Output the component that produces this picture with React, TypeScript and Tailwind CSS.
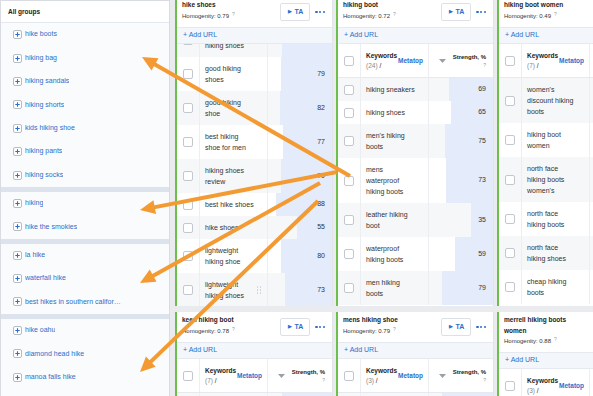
import { useEffect, useRef } from "react";

type Row = { kw: string[]; value: number };

type Card = {
  title: string;
  homogenity: string;
  count: number;
  rows: Row[];
  scrollTop?: number;
  grip?: boolean;
};

const groups: string[][] = [
  ["hike boots", "hiking bag", "hiking sandals", "hiking shorts", "kids hiking shoe", "hiking pants", "hiking socks"],
  ["hiking", "hike the smokies"],
  ["la hike", "waterfall hike", "best hikes in southern california"],
  ["hike oahu", "diamond head hike", "manoa falls hike"],
];

const topCards: Card[] = [
  {
    title: "hike shoes",
    homogenity: "0.79",
    count: 12,
    scrollTop: 55,
    grip: true,
    rows: [
      { kw: ["waterproof", "hiking shoes"], value: 78 },
      { kw: ["good hiking", "shoes"], value: 79 },
      { kw: ["good hiking", "shoe"], value: 82 },
      { kw: ["best hiking", "shoe for men"], value: 77 },
      { kw: ["hiking shoes", "review"], value: 79 },
      { kw: ["best hike shoes"], value: 88 },
      { kw: ["hike shoes"], value: 55 },
      { kw: ["lightweight", "hiking shoe"], value: 80 },
      { kw: ["lightweight", "hiking shoes"], value: 73 },
      { kw: ["trail shoes"], value: 61 },
    ],
  },
  {
    title: "hiking boot",
    homogenity: "0.72",
    count: 24,
    rows: [
      { kw: ["hiking sneakers"], value: 69 },
      { kw: ["hiking shoes"], value: 65 },
      { kw: ["men's hiking", "boots"], value: 75 },
      { kw: ["mens", "waterproof", "hiking boots"], value: 73 },
      { kw: ["leather hiking", "boot"], value: 35 },
      { kw: ["waterproof", "hiking boots"], value: 59 },
      { kw: ["men hiking", "boots"], value: 79 },
    ],
  },
  {
    title: "hiking boot women",
    homogenity: "0.49",
    count: 7,
    rows: [
      { kw: ["women's", "discount hiking", "boots"], value: 71 },
      { kw: ["hiking boot", "women"], value: 66 },
      { kw: ["north face", "hiking boots", "women's"], value: 52 },
      { kw: ["north face", "hiking boots"], value: 48 },
      { kw: ["north face", "hiking shoes"], value: 44 },
      { kw: ["cheap hiking", "boots"], value: 40 },
    ],
  },
];

const bottomCards: Card[] = [
  {
    title: "keen hiking boot",
    homogenity: "0.78",
    count: 7,
    rows: [{ kw: ["keen hiking boots"], value: 78 }],
  },
  {
    title: "mens hiking shoe",
    homogenity: "0.79",
    count: 3,
    rows: [{ kw: ["mens hiking shoes"], value: 79 }],
  },
  {
    title: "merrell hiking boots women",
    homogenity: "0.88",
    count: 3,
    rows: [{ kw: ["merrell hiking", "boots women"], value: 88 }],
  },
];

const arrows = [
  { x1: 350, y1: 176, x2: 142, y2: 57 },
  { x1: 337, y1: 172, x2: 140, y2: 210 },
  { x1: 320, y1: 183, x2: 140, y2: 283 },
  { x1: 318, y1: 201, x2: 140, y2: 372 },
];

function PlusBox() {
  return (
    <svg width="9" height="9" viewBox="0 0 9 9" className="shrink-0">
      <rect x="0.5" y="0.5" width="8" height="8" rx="1.5" fill="#fff" stroke="#b7bcc4" />
      <path d="M4.5 2.3v4.4M2.3 4.5h4.4" stroke="#2c6ecb" strokeWidth="1.1" />
    </svg>
  );
}

function Checkbox() {
  return <div className="h-[10px] w-[10px] rounded-[2px] border border-[#c3c8cf] bg-white" />;
}

function Sidebar() {
  return (
    <aside className="h-[396px] w-[170px] shrink-0 border-x border-t border-[#d9dde3] bg-[#fafbfc]">
      <div className="flex h-[22px] items-center border-b border-[#e4e7eb] bg-white pl-[7px] text-[6.5px] font-bold text-[#222]">
        All groups
      </div>
      {groups.map((g, gi) => (
        <div key={gi}>
          {gi > 0 && <div className="h-[5px] bg-[#dde3ed]" />}
          {g.map((item) => (
            <div key={item} className="flex h-[23.4px] items-center gap-[3px] pl-[12px]">
              <PlusBox />
              <span className="max-w-[96px] truncate text-[7px] text-[#2c6ecb]">{item}</span>
            </div>
          ))}
        </div>
      ))}
    </aside>
  );
}

function Dots() {
  return (
    <div className="flex items-center gap-[1.5px]">
      <span className="h-[2.2px] w-[2.2px] rounded-full bg-[#2c6ecb]" />
      <span className="h-[2.2px] w-[2.2px] rounded-full bg-[#2c6ecb]" />
      <span className="h-[2.2px] w-[2.2px] rounded-full bg-[#2c6ecb]" />
    </div>
  );
}

function Grip() {
  return (
    <div className="grid grid-cols-2 gap-[1.5px]">
      {[0, 1, 2, 3, 4, 5].map((i) => (
        <span key={i} className="h-[1.5px] w-[1.5px] rounded-full bg-[#c9d2de]" />
      ))}
    </div>
  );
}

function GroupCard({ card, tall }: { card: Card; tall: boolean }) {
  const ref = useRef<HTMLDivElement>(null);

  useEffect(() => {
    if (ref.current && card.scrollTop) ref.current.scrollTop = card.scrollTop;
  }, [card.scrollTop]);

  return (
    <div
      className={`flex w-[158px] shrink-0 flex-col border-l-2 border-r border-l-[#6cbf4a] border-r-[#e1e4e8] bg-white ${
        tall ? "h-[309px]" : "h-[120px]"
      }`}
    >
      <div className="flex items-start justify-between pb-[6px] pl-[5px] pr-[7px] pt-[3px]">
        <div>
          <div className="max-w-[80px] text-[6.5px] font-bold leading-[10.5px] text-[#222]">{card.title}</div>
          <div className="text-[6px] leading-[10px] text-[#333]">
            Homogenity: {card.homogenity}
            <span className="ml-[3px] align-top text-[5px] leading-[6px] text-[#999]">?</span>
          </div>
        </div>
        <div className="mt-[3px] flex items-center gap-[5px]">
          <div className="flex h-[18px] w-[30px] items-center justify-center gap-[3px] rounded-[2px] border border-[#dde1e6] bg-white text-[7px] font-bold text-[#2c6ecb]">
            <span className="text-[4.5px]">▶</span>TA
          </div>
          <Dots />
        </div>
      </div>

      <div className="flex h-[17px] shrink-0 items-center border-y border-[#e6eaf0] bg-[#f3f6fa] pl-[6px] text-[7px] text-[#2c6ecb]">
        + Add URL
      </div>

      <div ref={ref} className="min-h-0 flex-1 overflow-hidden">
        <div className="flex h-[34px] border-b border-[#e6e9ee] bg-white">
          <div className="flex w-[23px] items-center justify-center border-r border-[#eceef1]">
            <Checkbox />
          </div>
          <div className="flex w-[68px] items-center border-r border-[#eceef1] pl-[5px]">
            <div>
              <div className="text-[6.5px] font-bold leading-[11px] text-[#222]">Keywords</div>
              <div className="text-[6.5px] leading-[10px] text-[#222]">
                <span className="text-[#888]">({card.count})</span> /
              </div>
            </div>
            <span className="ml-[1px] text-[6.5px] font-bold text-[#2c6ecb]">Metatop</span>
          </div>
          <div className="flex flex-1 items-center pl-[10px] pr-[7px]">
            <svg width="7" height="4" viewBox="0 0 7 4">
              <path d="M0 0h7L3.5 4z" fill="#9aa0a8" />
            </svg>
            <div className="ml-auto flex flex-col items-end">
              <span className="text-[6px] font-bold leading-[9px] text-[#222]">Strength, %</span>
              <span className="text-[5px] leading-[7px] text-[#999]">?</span>
            </div>
          </div>
        </div>

        {card.rows.map((r, i) => (
          <div key={i} className={`flex ${i % 2 === 0 ? "bg-[#f6f7f9]" : "bg-white"}`}>
            <div className="flex w-[23px] shrink-0 items-center justify-center border-r border-[#eceef1]">
              <Checkbox />
            </div>
            <div className="flex w-[68px] shrink-0 items-center justify-between border-r border-[#eceef1] py-[6px] pl-[5px] pr-[6px]">
              <div>
                {r.kw.map((line) => (
                  <div key={line} className="whitespace-nowrap text-[7px] leading-[11px] text-[#333]">
                    {line}
                  </div>
                ))}
              </div>
              {card.grip && i === card.rows.length - 2 && <Grip />}
            </div>
            <div className="flex flex-1 justify-end">
              <div
                className="flex items-center justify-end bg-[#e4ecfb] pr-[7px] text-[7px] text-[#333]"
                style={{ width: `${r.value}%` }}
              >
                {r.value}
              </div>
            </div>
          </div>
        ))}
      </div>
    </div>
  );
}

function Arrows() {
  return (
    <svg className="pointer-events-none absolute inset-0" width="593" height="396">
      {arrows.map((a, i) => {
        const dx = a.x2 - a.x1;
        const dy = a.y2 - a.y1;
        const len = Math.hypot(dx, dy);
        const ux = dx / len;
        const uy = dy / len;
        const bx = a.x2 - ux * 15;
        const by = a.y2 - uy * 15;
        const px = -uy * 7;
        const py = ux * 7;
        return (
          <g key={i}>
            <line x1={a.x1} y1={a.y1} x2={a.x2 - ux * 10} y2={a.y2 - uy * 10} stroke="#f39a32" strokeWidth="4" />
            <polygon points={`${a.x2},${a.y2} ${bx + px},${by + py} ${bx - px},${by - py}`} fill="#f39a32" />
          </g>
        );
      })}
    </svg>
  );
}

export default function App() {
  return (
    <div className="relative flex h-[396px] w-[593px] overflow-hidden bg-[#e9ebef] font-['Liberation_Sans',Arial,sans-serif]">
      <Sidebar />
      <div className="ml-[5px] mt-[-3px] flex flex-col gap-[6px]">
        <div className="flex gap-[3px]">
          {topCards.map((c) => (
            <GroupCard key={c.title} card={c} tall />
          ))}
        </div>
        <div className="flex gap-[3px]">
          {bottomCards.map((c) => (
            <GroupCard key={c.title} card={c} tall={false} />
          ))}
        </div>
      </div>
      <Arrows />
    </div>
  );
}
